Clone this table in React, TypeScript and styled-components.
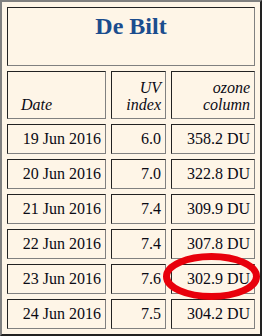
import React from "react";
import styled, { createGlobalStyle } from "styled-components";

const Global = createGlobalStyle`
  html, body {
    margin: 0;
    padding: 0;
    background: #fef5e7;
  }
`;

const Wrap = styled.div`
  position: relative;
  width: 262px;
  height: 336px;
  overflow: hidden;
`;

const Table = styled.table`
  width: 262px;
  border-collapse: separate;
  border-spacing: 5px;
  border-style: solid;
  border-width: 2px;
  border-color: #808080 #222 #222 #808080;
  background: #fef5e7;
  font-family: "Liberation Serif", "Times New Roman", serif;
  font-size: 16px;
  color: #0a0a14;
  table-layout: fixed;
`;

const Col = styled.col<{ $w: number }>`
  width: ${(p) => p.$w}px;
`;

const Cell = styled.td`
  border-style: solid;
  border-width: 1px;
  border-color: #222 #808080 #808080 #222;
  padding: 0 4px;
  height: 28px;
  text-align: right;
  vertical-align: middle;
  line-height: 18px;
  white-space: nowrap;
`;

const TitleCell = styled(Cell)`
  vertical-align: top;
  text-align: center;
  padding-top: 4px;
  height: 53px;
`;

const Title = styled.h2`
  margin: 0;
  font-size: 24px;
  line-height: 28px;
  font-weight: bold;
  color: #1b4d8e;
`;

const HeadCell = styled(Cell)<{ $left?: boolean }>`
  font-style: italic;
  vertical-align: bottom;
  line-height: 17px;
  padding-bottom: 5px;
  height: 41px;
  text-align: ${(p) => (p.$left ? "left" : "right")};
  padding-left: ${(p) => (p.$left ? "13px" : "4px")};
`;

const Mark = styled.svg`
  position: absolute;
  left: 160px;
  top: 250px;
  width: 104px;
  height: 54px;
  overflow: visible;
`;

const rows = [
  ["19 Jun 2016", "6.0", "358.2 DU"],
  ["20 Jun 2016", "7.0", "322.8 DU"],
  ["21 Jun 2016", "7.4", "309.9 DU"],
  ["22 Jun 2016", "7.4", "307.8 DU"],
  ["23 Jun 2016", "7.6", "302.9 DU"],
  ["24 Jun 2016", "7.5", "304.2 DU"],
];

export default function App() {
  return (
    <Wrap>
      <Global />
      <Table>
        <colgroup>
          <Col $w={99} />
          <Col $w={55} />
          <Col $w={84} />
        </colgroup>
        <tbody>
          <tr>
            <TitleCell colSpan={3}>
              <Title>De Bilt</Title>
            </TitleCell>
          </tr>
          <tr>
            <HeadCell $left>Date</HeadCell>
            <HeadCell>
              UV
              <br />
              index
            </HeadCell>
            <HeadCell>
              ozone
              <br />
              column
            </HeadCell>
          </tr>
          {rows.map((r) => (
            <tr key={r[0]}>
              <Cell>{r[0]}</Cell>
              <Cell>{r[1]}</Cell>
              <Cell>{r[2]}</Cell>
            </tr>
          ))}
        </tbody>
      </Table>
      <Mark viewBox="160 250 104 54">
        <ellipse cx="211.5" cy="276.5" rx="45" ry="20" fill="none" stroke="#e8000b" strokeWidth="7" />
      </Mark>
    </Wrap>
  );
}
